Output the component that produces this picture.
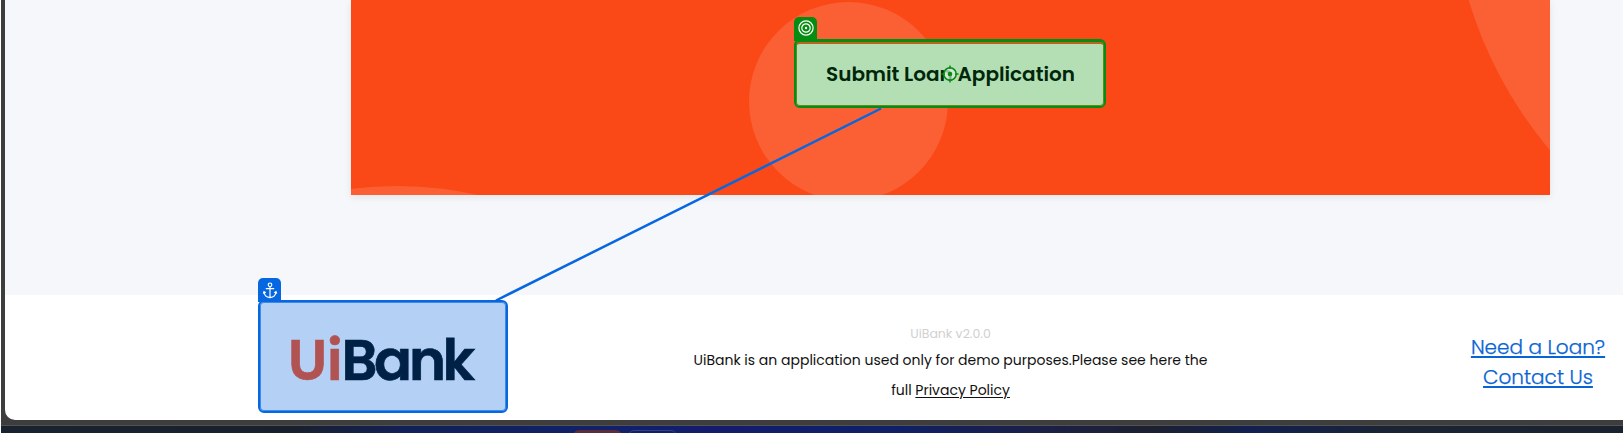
<div class="screen">
  <div class="window">
    <main>
      <section class="card">
        <svg class="decor" width="1199" height="195" aria-hidden="true">
          <circle cx="497.5" cy="101.5" r="99.5" />
          <circle cx="1520" cy="-120.5" r="420" />
          <ellipse cx="46" cy="335" rx="235" ry="149" />
        </svg>
        <div class="target">
          <span class="tab green">
            <svg width="16" height="16" viewBox="0 0 16 16" fill="none" stroke="#fff" stroke-width="1.2">
              <circle cx="8" cy="8" r="7.1" /><circle cx="8" cy="8" r="4.2" /><circle cx="8" cy="8" r="1.2" fill="#fff" stroke="none" />
            </svg>
          </span>
          <button><span>Submit Loan Application</span></button>
          <svg class="cross" width="18" height="18" viewBox="0 0 18 18" fill="none" stroke="#078c12" stroke-width="1.5">
            <circle cx="9" cy="9" r="6.2" fill="#d9e9dc" fill-opacity=".75" />
            <path d="M9 .5V4M9 14v3.5M.5 9H4M14 9h3.5" /><path d="M9.5 9v5" stroke="#8aa58d" /><circle cx="9" cy="9" r="2.3" fill="#078c12" stroke="none" />
          </svg>
        </div>
      </section>
    </main>
    <footer>
      <div class="brand">
        <span class="tab blue">
          <svg width="16" height="17" viewBox="0 0 16 17" fill="none" stroke="#fff" stroke-width="1.2">
            <circle cx="8" cy="2.8" r="1.8" /><path d="M8 4.6v11M3.8 6.6h8.4M2 9.8c.2 3.5 2.4 5.4 6 5.8 3.6-.4 5.8-2.3 6-5.8M1.3 11.6L2 9.6l1.8 1.1M14.7 11.6L14 9.6l-1.8 1.1" />
          </svg>
        </span>
        <svg class="logo" width="246" height="109" viewBox="260 302 246 109">
          <text y="380"><tspan class="ui" x="288 327">Ui</tspan><tspan class="bank" x="341.5 374 409 442.5">Bank</tspan></text>
        </svg>
      </div>
      <div class="about">
        <small>UiBank v2.0.0</small>
        <p class="copy">UiBank is an application used only for demo purposes.Please see here the</p>
        <p>full <u>Privacy Policy</u></p>
      </div>
      <nav><span>Need a Loan?</span><span>Contact Us</span></nav>
    </footer>
  </div>
  <div class="taskbar"><i class="red"></i><i class="indigo"></i></div>
  <svg class="link" width="1623" height="433" aria-hidden="true"><path d="M496 300.5L881 108.5" /></svg>
</div>

<style>
  :global(body) { background: #fff; overflow: hidden; }
  .screen { position: relative; width: 1623px; height: 433px; overflow: hidden; box-sizing: border-box; padding-left: 1px; background: linear-gradient(#3d3d3d, #3d3d3d) 1px 0 no-repeat; font-family: Poppins, Inter, sans-serif; }
  .window { height: 420px; margin-left: 4px; background: #fff; border-bottom-left-radius: 10px; overflow: hidden; }
  main { height: 295px; background: #f5f7fb; }
  .card { position: relative; width: 1199px; height: 195px; margin-left: 346px; background: #fa4817; box-shadow: 0 2px 8px #00000014; }
  .decor { position: absolute; inset: 0; fill: #fb5f34; overflow: hidden; }
  .target { position: absolute; left: 443px; top: 39px; width: 312px; height: 69px; }
  button { position: relative; width: 100%; height: 100%; padding: 0 0 0 1px; border: 2px solid #078c12; border-radius: 6px; background: #b4deb4; box-shadow: inset 0 1px #078c12, inset 0 0 0 1px #5f8a1c, inset 0 3px #b96520; color: #00270b; font: 600 20px Poppins, Inter, sans-serif; white-space: nowrap; }
  .tab { position: absolute; width: 23px; height: 24px; display: grid; place-items: center; border-radius: 5px 5px 0 0; }
  .green { left: 0; top: -22px; background: #078c12; }
  .green svg { margin-top: -2px; }
  .blue { left: -2px; top: -24px; background: #0667e0; }
  .cross { position: absolute; left: 147px; top: 26px; }
  footer { height: 125px; display: flex; align-items: flex-start; }
  footer > * { flex: none; }
  .brand { position: relative; box-sizing: border-box; width: 250px; height: 113px; margin: 5px 0 0 253px; border: 2px solid #0667e0; border-radius: 6px; background: #b4d1f5; box-shadow: inset 0 0 0 1px #3c8ae9; }
  .logo { display: block; }
  .logo text { font: 600 56px Poppins, Inter, sans-serif; stroke-width: .7; }
  .ui { fill: #b25353; stroke: #b25353; }
  .bank { fill: #002146; stroke: #002146; }
  .about { width: 514px; margin-left: 185.5px; padding-top: 29px; display: flex; flex-direction: column; align-items: center; white-space: nowrap; }
  small { color: #d0d0d0; font-size: 12.5px; line-height: 20px; }
  p { margin: 0; font-size: 14px; line-height: 30px; color: #111; }
  .copy { margin-top: 1px; }
  u { text-underline-offset: 2px; }
  nav { margin-left: 263.5px; width: 134px; padding-top: 37px; display: flex; flex-direction: column; align-items: center; color: #0764d4; font-size: 20px; font-weight: 300; line-height: 30px; white-space: nowrap; -webkit-text-stroke: .25px #0764d4; }
  nav span { text-decoration: underline; text-decoration-thickness: 2px; text-underline-offset: 2px; }
  .taskbar { position: relative; height: 8px; margin-top: 5px; background: linear-gradient(90deg, #19222f, #18202d 18%, #112058 25%, #12206a 37%, #131c6c 44%, #101f66 55%, #1c2040 66%, #1c2030 71%, #112050 77%, #1a2432 86%, #1a2230); overflow: hidden; border-top: 1px solid #525252; box-sizing: border-box; }
  .taskbar i { position: absolute; top: 4px; width: 49px; height: 12px; border-radius: 6px; }
  .red { left: 572px; background: #5a2d38; }
  .indigo { left: 627px; border: 1px solid #34407f; box-sizing: border-box; }
  .link { position: absolute; inset: 0; pointer-events: none; fill: none; stroke: #0667e0; stroke-width: 2.5; }
</style>
